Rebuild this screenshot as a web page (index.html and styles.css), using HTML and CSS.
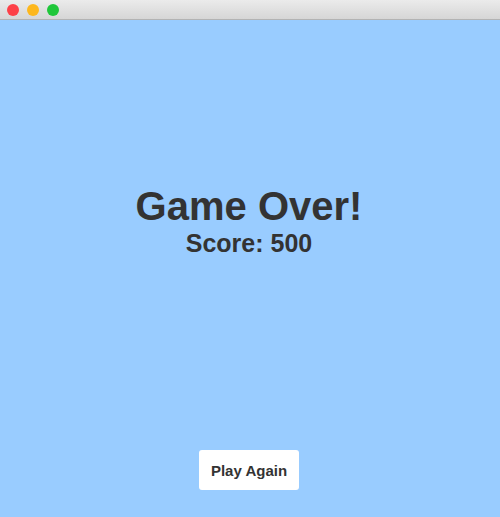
FILE: index.html
```html
<!DOCTYPE html>
<html>
<head>
<meta charset="utf-8">
<link rel="stylesheet" href="styles.css">
</head>
<body>
<div class="window">
  <div class="titlebar">
    <span class="dot red"></span>
    <span class="dot yellow"></span>
    <span class="dot green"></span>
  </div>
  <div class="content">
    <div class="result">
      <h1 class="title">Game Over!</h1>
      <p class="score">Score: 500</p>
    </div>
    <div class="actions">
      <button class="btn">Play Again</button>
    </div>
  </div>
</div>
</body>
</html>
```
FILE: styles.css
```css
html, body {
  margin: 0;
  padding: 0;
  height: 100%;
}
body {
  font-family: "Liberation Sans", Arial, sans-serif;
  background: #99ccff;
}
.window {
  display: flex;
  flex-direction: column;
  height: 100%;
}
.titlebar {
  height: 19px;
  flex: none;
  display: flex;
  align-items: center;
  gap: 8px;
  padding-left: 7px;
  background: linear-gradient(#ebebeb, #d6d6d6);
  border-bottom: 1px solid #b3b3b3;
}
.dot {
  width: 12px;
  height: 12px;
  border-radius: 50%;
}
.red { background: #fd4047; }
.yellow { background: #fdb71c; }
.green { background: #1fc73a; }
.content {
  flex: 1;
  display: flex;
  flex-direction: column;
  align-items: center;
  padding-right: 2px;
  color: #333333;
}
.result {
  margin-top: 162px;
  text-align: center;
}
.title {
  margin: 0;
  font-size: 40px;
  font-weight: bold;
  line-height: 48px;
}
.score {
  margin: 0;
  font-size: 25px;
  font-weight: bold;
  line-height: 26px;
}
.actions {
  margin-top: auto;
  margin-bottom: 27px;
}
.btn {
  width: 100px;
  height: 40px;
  border: none;
  border-radius: 3px;
  background: #ffffff;
  color: #333333;
  font-family: "Liberation Sans", Arial, sans-serif;
  font-size: 15px;
  font-weight: bold;
  padding: 0;
}
```
